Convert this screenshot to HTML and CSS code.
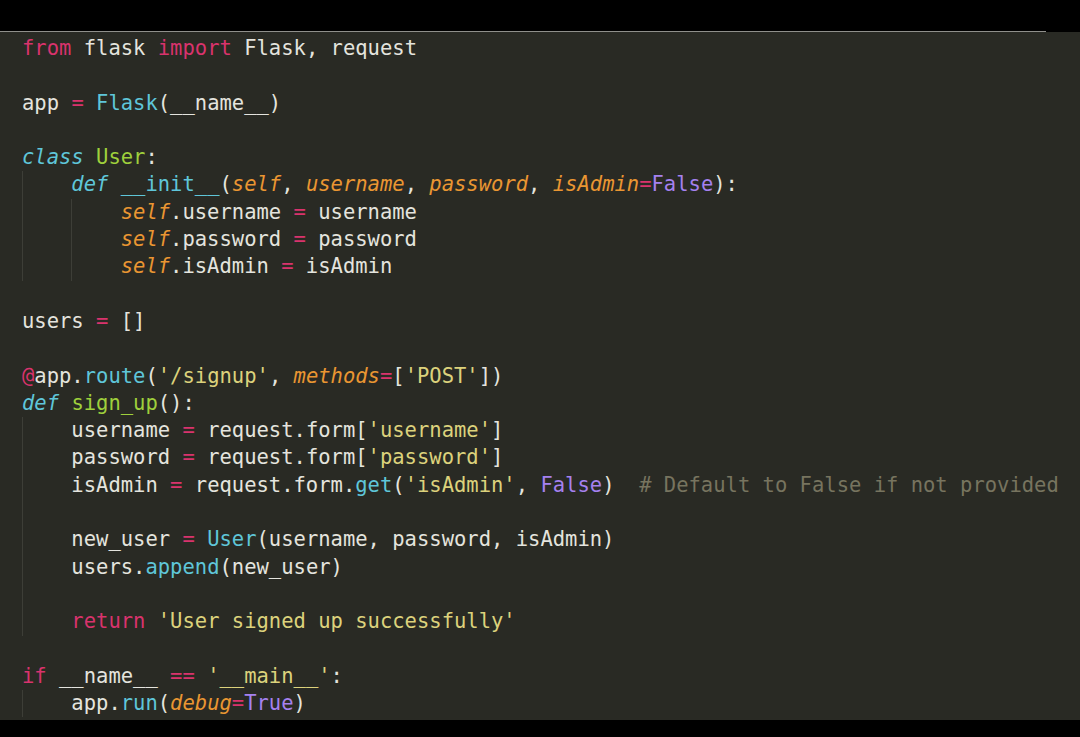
FILE: index.html
```html
<!DOCTYPE html>
<html>
<head>
<meta charset="utf-8">
<link rel="stylesheet" href="styles.css">
</head>
<body>
<div class="screen">
  <div class="topbar"><div class="rule"></div></div>
  <div class="editor">
    <div class="code">
      <div class="ln"><span class="kw">from</span> flask <span class="kw">import</span> Flask, request</div>
      <div class="ln"></div>
      <div class="ln">app <span class="op">=</span> <span class="fn">Flask</span>(__name__)</div>
      <div class="ln"></div>
      <div class="ln"><span class="st">class</span> <span class="cl">User</span>:</div>
      <div class="ln"><span class="ind"></span><span class="st">def</span> <span class="fn">__init__</span>(<span class="pa">self</span>, <span class="pa">username</span>, <span class="pa">password</span>, <span class="pa">isAdmin</span><span class="op">=</span><span class="co">False</span>):</div>
      <div class="ln"><span class="ind"></span><span class="ind"></span><span class="pa">self</span>.username <span class="op">=</span> username</div>
      <div class="ln"><span class="ind"></span><span class="ind"></span><span class="pa">self</span>.password <span class="op">=</span> password</div>
      <div class="ln"><span class="ind"></span><span class="ind"></span><span class="pa">self</span>.isAdmin <span class="op">=</span> isAdmin</div>
      <div class="ln"></div>
      <div class="ln">users <span class="op">=</span> []</div>
      <div class="ln"></div>
      <div class="ln"><span class="op">@</span>app.<span class="fn">route</span>(<span class="str">'/signup'</span>, <span class="pa">methods</span><span class="op">=</span>[<span class="str">'POST'</span>])</div>
      <div class="ln"><span class="st">def</span> <span class="cl">sign_up</span>():</div>
      <div class="ln"><span class="ind"></span>username <span class="op">=</span> request.form[<span class="str">'username'</span>]</div>
      <div class="ln"><span class="ind"></span>password <span class="op">=</span> request.form[<span class="str">'password'</span>]</div>
      <div class="ln"><span class="ind"></span>isAdmin <span class="op">=</span> request.form.<span class="fn">get</span>(<span class="str">'isAdmin'</span>, <span class="co">False</span>)  <span class="cm"># Default to False if not provided</span></div>
      <div class="ln"><span class="ind"></span></div>
      <div class="ln"><span class="ind"></span>new_user <span class="op">=</span> <span class="fn">User</span>(username, password, isAdmin)</div>
      <div class="ln"><span class="ind"></span>users.<span class="fn">append</span>(new_user)</div>
      <div class="ln"><span class="ind"></span></div>
      <div class="ln"><span class="ind"></span><span class="kw">return</span> <span class="str">'User signed up successfully'</span></div>
      <div class="ln"></div>
      <div class="ln"><span class="kw">if</span> __name__ <span class="op">==</span> <span class="str">'__main__'</span>:</div>
      <div class="ln"><span class="ind"></span>app.<span class="fn">run</span>(<span class="pa">debug</span><span class="op">=</span><span class="co">True</span>)</div>
    </div>
  </div>
  <div class="bottombar"></div>
</div>
</body>
</html>
```

FILE: styles.css
```css
html, body {
  margin: 0;
  padding: 0;
  background: #000;
}
.screen {
  width: 1080px;
  height: 737px;
  display: flex;
  flex-direction: column;
  background: #000;
  overflow: hidden;
}
.topbar {
  height: 32px;
  flex: none;
  background: #000;
  display: flex;
  flex-direction: column;
  justify-content: flex-end;
}
.rule {
  width: 1046px;
  height: 1px;
  background: #8f8f8b;
}
.editor {
  height: 688px;
  flex: none;
  background: #292a24;
}
.bottombar {
  flex: 1;
  background: #000;
}
.code {
  padding: 3px 0 0 22px;
  font-family: "DejaVu Sans Mono", monospace;
  font-size: 20.5px;
  line-height: 27.3px;
  color: #e4e4de;
}
.ln {
  height: 27.3px;
  white-space: pre;
}
.ind {
  display: inline-block;
  width: 4ch;
  height: 27.3px;
  vertical-align: top;
  border-left: 1px solid #3d3e37;
  box-sizing: border-box;
}
.kw { color: #d9336d; }
.op { color: #d9336d; }
.st { color: #5fc6d9; font-style: italic; }
.fn { color: #5fc6d9; }
.cl { color: #9fd03c; }
.pa { color: #ea9632; font-style: italic; }
.co { color: #a581ef; }
.str { color: #dcd27c; }
.cm { color: #77745f; }
```
